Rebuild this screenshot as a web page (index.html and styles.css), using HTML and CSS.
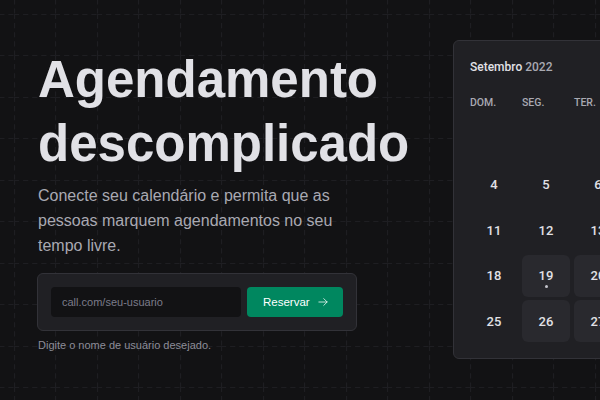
FILE: index.html
```html
<!DOCTYPE html>
<html lang="pt-BR">
<head>
<meta charset="utf-8">
<title>Agendamento descomplicado</title>
<link rel="stylesheet" href="styles.css">
</head>
<body>
<main class="hero">
  <section class="intro">
    <h1 class="title">Agendamento descomplicado</h1>
    <p class="lead">Conecte seu calendário e permita que as pessoas marquem agendamentos no seu tempo livre.</p>
    <form class="claim">
      <input class="claim-input" type="text" placeholder="call.com/seu-usuario">
      <button class="claim-btn" type="button">Reservar
        <svg class="claim-icon" viewBox="0 0 256 256" aria-hidden="true"><path d="M40 128h176M144 56l72 72-72 72" fill="none" stroke="currentColor" stroke-width="16" stroke-linecap="round" stroke-linejoin="round"/></svg>
      </button>
    </form>
    <p class="hint">Digite o nome de usuário desejado.</p>
  </section>

  <section class="calendar">
    <header class="cal-title">Setembro <span class="cal-year">2022</span></header>
    <div class="cal-week">
      <span>DOM.</span><span>SEG.</span><span>TER.</span><span>QUA.</span><span>QUI.</span><span>SEX.</span><span>SÁB.</span>
    </div>
    <div class="cal-days">
      <span class="day"></span><span class="day"></span><span class="day"></span><span class="day"></span><span class="day">1</span><span class="day">2</span><span class="day">3</span>
      <span class="day">4</span><span class="day">5</span><span class="day">6</span><span class="day">7</span><span class="day">8</span><span class="day">9</span><span class="day">10</span>
      <span class="day">11</span><span class="day">12</span><span class="day">13</span><span class="day">14</span><span class="day">15</span><span class="day">16</span><span class="day">17</span>
      <span class="day">18</span><span class="day day-open day-today">19</span><span class="day day-open">20</span><span class="day day-open">21</span><span class="day day-open">22</span><span class="day day-open">23</span><span class="day">24</span>
      <span class="day">25</span><span class="day day-open">26</span><span class="day day-open">27</span><span class="day day-open">28</span><span class="day day-open">29</span><span class="day day-open">30</span><span class="day"></span>
    </div>
  </section>
</main>
</body>
</html>
```
FILE: styles.css
```css
* { box-sizing: border-box; }

html, body {
  margin: 0;
  height: 100%;
}

body {
  overflow: hidden;
  background-color: #121214;
  background-image: url("data:image/svg+xml,%3Csvg xmlns='http://www.w3.org/2000/svg' width='41.5' height='41.5'%3E%3Cpath d='M0 0.5H41.5M0.5 0V41.5' stroke='%231e1e22' stroke-width='1' stroke-dasharray='5 4' fill='none'/%3E%3C/svg%3E");
  background-position: 14px 14px;
  background-size: 41.5px 41.5px;
  font-family: "Liberation Sans", Arial, sans-serif;
  color: #e1e1e6;
}

.hero {
  display: flex;
  align-items: flex-start;
  padding-left: 37px;
}

.intro {
  flex: 0 0 416px;
  padding-top: 48px;
}

.title {
  margin: 0;
  font-size: 51px;
  line-height: 64px;
  font-weight: 700;
  color: #e1e1e6;
  padding-left: 1px;
}

.lead {
  margin: 7px 0 0;
  max-width: 320px;
  font-size: 16px;
  line-height: 25px;
  color: #a9a9b2;
  padding-left: 1px;
}

.claim {
  display: flex;
  gap: 6px;
  width: 320px;
  margin-top: 15px;
  padding: 13px;
  background: #202024;
  border: 1px solid #323238;
  border-radius: 6px;
}

.claim-input {
  flex: 1;
  min-width: 0;
  height: 30px;
  padding: 0 11px;
  border: 0;
  border-radius: 4px;
  background: #121214;
  color: #e1e1e6;
  font-family: inherit;
  font-size: 11px;
}

.claim-input::placeholder { color: #7c7c8a; }

.claim-btn {
  display: flex;
  align-items: center;
  gap: 7px;
  height: 30px;
  width: 96px;
  padding: 0 16px;
  border: 0;
  border-radius: 4px;
  background: #00875f;
  color: #fff;
  font-family: inherit;
  font-size: 11.5px;
}

.claim-icon {
  width: 12px;
  height: 12px;
  flex: 0 0 12px;
}

.hint {
  margin: 8px 0 0;
  padding-left: 1px;
  font-size: 11px;
  color: #8d8d99;
}

.calendar {
  flex: 0 0 auto;
  margin-top: 40px;
  padding: 16px;
  background: #202024;
  border: 1px solid #323238;
  border-radius: 6px;
  font-family: Roboto, "Liberation Sans", sans-serif;
}

.cal-title {
  font-size: 12px;
  line-height: 20px;
  font-weight: 500;
  color: #e1e1e6;
}

.cal-year { color: #a9a9b2; }

.cal-week,
.cal-days {
  display: grid;
  grid-template-columns: repeat(7, 48px);
  column-gap: 4px;
}

.cal-week {
  margin-top: 17px;
  height: 16px;
  align-items: center;
  font-size: 10.5px;
  font-weight: 500;
  color: #a9a9b2;
}

.cal-days {
  margin-top: 8px;
  grid-auto-rows: 42px;
  row-gap: 3.5px;
}

.day {
  position: relative;
  display: flex;
  align-items: center;
  justify-content: center;
  border-radius: 6px;
  font-size: 13px;
  font-weight: 500;
  color: #e1e1e6;
}

.day-open { background: #29292e; }

.day-today::after {
  content: "";
  position: absolute;
  left: 50%;
  top: 30px;
  width: 3px;
  height: 3px;
  margin-left: -1.5px;
  border-radius: 50%;
  background: #c4c4cc;
}
```
